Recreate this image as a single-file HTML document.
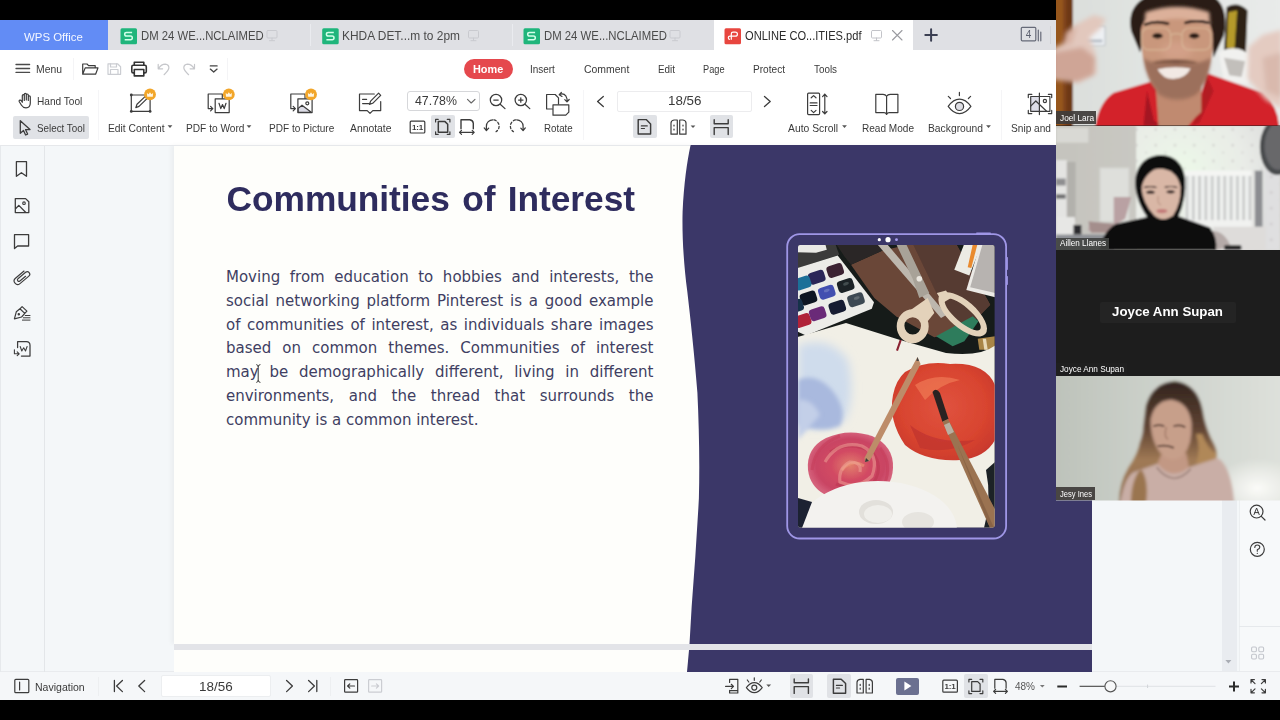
<!DOCTYPE html>
<html><head><meta charset="utf-8"><title>WPS Office</title>
<style>
*{box-sizing:border-box;margin:0;padding:0}
html,body{width:1280px;height:720px;overflow:hidden;background:#000;font-family:"Liberation Sans",sans-serif;color:#333}
#root{position:absolute;left:0;top:0;width:1280px;height:720px;overflow:hidden;background:#000}
#root div,#root svg,#root span{position:absolute}
.t{white-space:nowrap;font-size:12px;color:#3a3a3a}
svg{overflow:visible}
.ic{fill:none;stroke:#3c3c3c;stroke-width:1.2;stroke-linecap:round;stroke-linejoin:round}
.lt{stroke:#cbcdd2}
.hl{background:#e0e2e6;border-radius:2px}
</style></head><body>
<div id="root">
<!-- ===== app chrome backgrounds ===== -->
<div style="left:0;top:20px;width:1056px;height:30px;background:#dfe0e4"></div>
<div style="left:0;top:50px;width:1056px;height:95px;background:#fff"></div>
<div style="left:0;top:145px;width:1280px;height:527px;background:#f4f7f9"></div>
<div style="left:0;top:671px;width:1280px;height:29px;background:#f5f7f9;border-top:1px solid #e9ebee"></div>
<!-- tabs -->
<div style="left:0;top:20px;width:108px;height:30px;background:#628cf5"></div>
<div style="left:714px;top:20px;width:199px;height:30px;background:#fff"></div>
<div style="left:310px;top:24px;width:1px;height:22px;background:#eaebef"></div>
<div style="left:511.5px;top:24px;width:1px;height:22px;background:#eaebef"></div>
<div style="left:1050px;top:26px;width:1px;height:18px;background:#d3d4d9"></div>
<!-- Home pill -->
<div style="left:463.5px;top:59px;width:49px;height:19.5px;border-radius:10px;background:#e5484d"></div>
<!-- select tool hl -->
<div class="hl" style="left:12.5px;top:115.5px;width:76.5px;height:23.5px"></div>
<div class="hl" style="left:431px;top:115px;width:23.5px;height:23px"></div>
<div class="hl" style="left:632.5px;top:115px;width:24px;height:23px"></div>
<div class="hl" style="left:709.5px;top:115px;width:23.5px;height:23px"></div>
<!-- inputs -->
<div style="left:406.5px;top:90.5px;width:73.5px;height:20.5px;border:1px solid #d6d7da;border-radius:3px;background:#fff"></div>
<div style="left:616.5px;top:90.5px;width:135px;height:21px;border:1px solid #ececee;border-radius:2px;background:#fff"></div>
<!-- separators -->
<div style="left:73px;top:58px;width:1px;height:22px;background:#f4f4f6"></div>
<div style="left:227px;top:58px;width:1px;height:22px;background:#f4f4f6"></div>
<div style="left:98px;top:90px;width:1px;height:50px;background:#f5f5f7"></div>
<div style="left:1001px;top:90px;width:1px;height:50px;background:#f5f5f7"></div>
<div style="left:582.5px;top:90px;width:1px;height:50px;background:#f5f5f7"></div>
<!-- left sidebar border -->
<div style="left:0;top:145px;width:1px;height:527px;background:#e6e9ec"></div>
<div style="left:44px;top:145px;width:1px;height:527px;background:#e3e6e9"></div>
<!-- status -->
<div class="hl" style="left:789.5px;top:674px;width:23.5px;height:24px"></div>
<div class="hl" style="left:827px;top:674px;width:24px;height:24px"></div>
<div class="hl" style="left:964px;top:674px;width:24px;height:24px"></div>
<div style="left:161px;top:675px;width:110px;height:22px;background:#fff;border:1px solid #eceef0;border-radius:2px"></div>
<div style="left:896px;top:677.5px;width:23px;height:17px;background:#6b7090;border-radius:2px"></div>
<!-- right panels -->
<div style="left:1221.5px;top:500px;width:15px;height:171px;background:#e9ecf0"></div>
<div style="left:1238.5px;top:500px;width:42px;height:171px;background:#f7f9fa;border-left:1px solid #eceff1"></div>
<div style="left:1239px;top:626px;width:41px;height:1px;background:#e6e9ec"></div>

<!-- ===== slide page ===== -->
<div style="left:174px;top:145px;width:918px;height:499px;background:#fefefb;box-shadow:-3px 0 4px rgba(0,0,0,.04)"></div>
<div style="left:174px;top:644px;width:918px;height:6px;background:#e3e4e8"></div>
<div style="left:174px;top:650px;width:918px;height:22px;background:#fefefb"></div>
<div style="left:0;top:144.5px;width:690px;height:1px;background:#e6e8eb"></div>
<svg style="left:0;top:0" width="1280" height="720" viewBox="0 0 1280 720">
<path fill="#3b3768" d="M690.6 145 C687 162 684 183 682.6 212 C682 234 683.5 263 687.3 291.6 C690.6 320 694.5 356 697.4 392.7 C699 426 699.8 462 698.9 498 C697 534 694.5 570 691.7 606 L689.5 644 L1092 644 L1092 145 Z"/>
<path fill="#3b3768" d="M689 650 L1092 650 L1092 672 L687 672 Z"/>
<rect x="787.2" y="234.1" width="218.9" height="304.4" rx="12.5" fill="none" stroke="#9f96e6" stroke-width="1.8"/><rect x="976" y="232.5" width="15" height="1.6" rx=".8" fill="#9f96e6"/><rect x="1006.4" y="257" width="1.5" height="13" rx=".7" fill="#9f96e6"/><rect x="1006.4" y="276" width="1.5" height="9" rx=".7" fill="#9f96e6"/>
<circle cx="879.3" cy="239.7" r="1.6" fill="#fff"/><circle cx="888" cy="239.7" r="2.6" fill="#fff"/><circle cx="896.5" cy="239.7" r="1.4" fill="#a79df0"/>
<path d="M256.3 364.6 Q258.2 365 258.2 366.5 Q258.2 365 260.4 364.6 M258.2 366 V381 M256.3 382.4 Q258.2 382 258.2 380.5 Q258.2 382 260.4 382.4" fill="none" stroke="#333" stroke-width="1"/>
</svg>

<!-- slide body text -->
<div style="left:226px;top:264.81px;width:427.5px;height:24px;line-height:24px;font-size:15px;font-family:'DejaVu Sans','Liberation Sans',sans-serif;color:#403e62;white-space:nowrap;text-align:justify;text-align-last:justify;">Moving from education to hobbies and interests, the</div>
<div style="left:226px;top:288.66px;width:427.5px;height:24px;line-height:24px;font-size:15px;font-family:'DejaVu Sans','Liberation Sans',sans-serif;color:#403e62;white-space:nowrap;text-align:justify;text-align-last:justify;">social networking platform Pinterest is a good example</div>
<div style="left:226px;top:312.51px;width:427.5px;height:24px;line-height:24px;font-size:15px;font-family:'DejaVu Sans','Liberation Sans',sans-serif;color:#403e62;white-space:nowrap;text-align:justify;text-align-last:justify;">of communities of interest, as individuals share images</div>
<div style="left:226px;top:336.36px;width:427.5px;height:24px;line-height:24px;font-size:15px;font-family:'DejaVu Sans','Liberation Sans',sans-serif;color:#403e62;white-space:nowrap;text-align:justify;text-align-last:justify;">based on common themes. Communities of interest</div>
<div style="left:226px;top:360.21px;width:427.5px;height:24px;line-height:24px;font-size:15px;font-family:'DejaVu Sans','Liberation Sans',sans-serif;color:#403e62;white-space:nowrap;text-align:justify;text-align-last:justify;">may be demographically different, living in different</div>
<div style="left:226px;top:384.06px;width:427.5px;height:24px;line-height:24px;font-size:15px;font-family:'DejaVu Sans','Liberation Sans',sans-serif;color:#403e62;white-space:nowrap;text-align:justify;text-align-last:justify;">environments, and the thread that surrounds the</div>
<div style="left:226px;top:407.91px;width:427.5px;height:24px;line-height:24px;font-size:15px;font-family:'DejaVu Sans','Liberation Sans',sans-serif;color:#403e62;white-space:nowrap;">community is a common interest.</div>

<!-- ===== painting photo inside tablet ===== -->
<svg style="left:0;top:0" width="1280" height="720" viewBox="0 0 1280 720">
<defs>
<clipPath id="pc"><rect x="798" y="245" width="196.6" height="282.5" rx="2"/></clipPath>
<filter id="pb" x="-10%" y="-10%" width="120%" height="120%"><feGaussianBlur stdDeviation="0.7"/></filter>
<filter id="pb2" x="-20%" y="-20%" width="140%" height="140%"><feGaussianBlur stdDeviation="2.2"/></filter>
<filter id="pb3" x="-20%" y="-20%" width="140%" height="140%"><feGaussianBlur stdDeviation="5"/></filter>
<radialGradient id="redg" cx=".5" cy=".45" r=".6"><stop offset="0" stop-color="#e0533f"/><stop offset=".7" stop-color="#d8442f"/><stop offset="1" stop-color="#c9392f"/></radialGradient>
<radialGradient id="roseg" cx=".5" cy=".5" r=".5"><stop offset="0" stop-color="#e27f6c"/><stop offset=".45" stop-color="#d24a63"/><stop offset=".8" stop-color="#c94463"/><stop offset="1" stop-color="#d4607a"/></radialGradient>
</defs>
<g clip-path="url(#pc)">
<rect x="798" y="244.5" width="197" height="283" fill="#161b19"/>
<g filter="url(#pb)">
<path d="M851.0 264.7 L882.7 250.5 L912.7 243.8 L956.0 243.8 L990.2 304.7 L964.3 331.3 L934.3 337.2 L896.0 316.3 L874.3 298.0 Z" fill="#6b4739"/>
<path d="M912.7 243.8 L956.0 243.8 L990.2 304.7 L964.3 331.3 L946.0 313.0 Z" fill="#573a31"/>
<path d="M836.0 243.8 L879.3 243.8 L882.7 250.5 L851.0 264.7 L844.3 256.3 Z" fill="#2a2725"/>
<path d="M936.0 336.3 L972.7 316.3 L978.5 321.3 L964.3 341.3 L952.7 346.3 Z" fill="#2e7b5c"/>
<path d="M977.7 338.8 L995.2 336.3 L995.2 349.7 L979.3 349.7 Z" fill="#a98547"/>
<path d="M982.7 338.8 L986.0 338.8 L987.7 349.7 L984.3 349.7 Z" fill="#e8d9b8"/>
<path d="M954.3 269.7 L964.3 243.8 L981.8 243.8 L969.3 275.5 Z" fill="#ecebe4"/>
<path d="M972.7 244.7 L977.3 244.7 L971.3 268.0 L967.7 267.2 Z" fill="#e98a2e"/>
<path d="M980.2 243.8 L995.2 243.8 L995.2 297.2 L966.3 290.0 Z" fill="#eceae6"/>
<path d="M982.7 243.8 L995.2 243.8 L995.2 293.0 L970.2 287.2 Z" fill="#b7b3b0"/>
<path d="M796.8 243.8 L835.2 243.8 L839.3 254.7 L798.0 268.0 L796.8 268.0 Z" fill="#3b3b3a"/>
<path d="M796.8 243.8 L825.2 243.8 L826.8 249.7 L816.0 252.7 L796.8 252.2 Z" fill="#e9e9e6"/>
<path d="M796.8 268.3 L837.7 255.5 L874.0 302.2 L871.8 308.8 L806.0 335.5 L796.8 331.3 Z" fill="#ecece8"/>
<rect x="808.6" y="271.2" width="16.4" height="12" rx="3.4" fill="#2a2858" transform="rotate(-18 816.8 277.2)"/>
<rect x="827.0" y="264.5" width="16.4" height="12" rx="3.4" fill="#3a2030" transform="rotate(-18 835.2 270.5)"/>
<rect x="794.5" y="277.0" width="16.4" height="12" rx="3.4" fill="#1f6f98" transform="rotate(-18 802.7 283.0)"/>
<rect x="818.6" y="286.2" width="16.4" height="12" rx="3.4" fill="#4350b0" transform="rotate(-18 826.8 292.2)"/>
<rect x="837.5" y="279.5" width="16.4" height="12" rx="3.4" fill="#1a2428" transform="rotate(-18 845.7 285.5)"/>
<rect x="800.3" y="292.0" width="16.4" height="12" rx="3.4" fill="#101820" transform="rotate(-18 808.5 298.0)"/>
<rect x="829.1" y="301.2" width="16.4" height="12" rx="3.4" fill="#161c30" transform="rotate(-18 837.3 307.2)"/>
<rect x="847.8" y="293.7" width="16.4" height="12" rx="3.4" fill="#3e4a52" transform="rotate(-18 856.0 299.7)"/>
<rect x="794.5" y="314.5" width="16.4" height="12" rx="3.4" fill="#b02038" transform="rotate(-18 802.7 320.5)"/>
<rect x="809.5" y="307.8" width="16.4" height="12" rx="3.4" fill="#6a2a78" transform="rotate(-18 817.7 313.8)"/>
<rect x="787.0" y="300.3" width="16.4" height="12" rx="3.4" fill="#18324a" transform="rotate(-18 795.2 306.3)"/>
<ellipse cx="846.0" cy="283.8" rx="3" ry="1.6" fill="#fff" opacity=".18" transform="rotate(-18 846.0 283.8)"/>
<ellipse cx="856.8" cy="298.0" rx="3" ry="1.6" fill="#fff" opacity=".18" transform="rotate(-18 856.8 298.0)"/>
<ellipse cx="826.8" cy="290.5" rx="3" ry="1.6" fill="#fff" opacity=".18" transform="rotate(-18 826.8 290.5)"/>
<path d="M796.8 337.2 L846.0 323.0 L899.3 339.7 L946.0 353.0 Q979.3 357.2 995.2 345.5 L995 528 L798 528 Z" fill="#f1efe6"/>
</g>
<!-- blue wash -->
<path d="M798 345 Q830 335 848 360 Q856 395 845 420 Q820 432 798 425 Z" fill="#cfdcec" filter="url(#pb3)"/><path d="M798 380 Q815 372 832 390 Q848 410 840 426 Q820 434 798 424 Z" fill="#a9b9de" filter="url(#pb2)"/>
<path d="M798 400 Q812 398 820 415 L798 440 Z" fill="#c3cfe8" filter="url(#pb2)"/>

<!-- red flower -->
<g filter="url(#pb)">
<path d="M905 372 Q925 360 950 364 Q985 362 995 385 L995 440 Q985 458 960 460 Q925 462 905 445 Q888 420 893 395 Q896 380 905 372 Z" fill="url(#redg)"/>
<path d="M915 385 Q935 372 960 380 Q940 384 925 400 Z" fill="#ef7a55" opacity=".7"/>
<path d="M910 425 Q935 445 975 440 Q950 455 920 448 Z" fill="#c2352f" opacity=".8"/>
<!-- rose -->
<path d="M808 470 Q806 448 826 438 Q848 428 872 436 Q894 446 893 468 Q892 490 872 496 Q846 502 824 494 Q810 486 808 470 Z" fill="url(#roseg)"/><path d="M830 452 Q850 440 872 452 Q884 466 874 482 Q856 492 836 484" fill="none" stroke="#b8324e" stroke-width="3" opacity=".45"/><path d="M842 470 Q852 458 864 466" fill="none" stroke="#ef9a78" stroke-width="3" opacity=".6"/>
<path d="M825 462 Q838 440 862 446 Q880 455 872 476 Q858 490 840 482 Q838 468 850 462 Q862 462 860 472" fill="none" stroke="#f0a899" stroke-width="3.2" opacity=".5"/>
<path d="M812 470 Q815 445 840 436 M880 448 Q893 465 884 485" fill="none" stroke="#c8405e" stroke-width="3" opacity=".7"/>
<!-- white palette -->
<ellipse cx="878" cy="530" rx="79" ry="49" fill="#f3f2ef"/>
<ellipse cx="876" cy="512" rx="17" ry="12" fill="#e2e0db"/><ellipse cx="918" cy="522" rx="16" ry="10" fill="#e6e4df"/>
<ellipse cx="878" cy="514" rx="14" ry="9" fill="#efeeea"/>
<!-- dark corners -->
<path d="M798 498 L812 502 L802 528 L798 528 Z" fill="#1c2132"/>
<path d="M986 470 L995 462 L995 528 L984 528 Q992 500 986 470 Z" fill="#1d2026"/>
<!-- pencil -->
<path d="M917.5 357 L920.6 364 L869.6 461 L865 462 L864.4 458 L913.6 364 Z" fill="#bd8c69"/><path d="M917.5 357 L919 361 L916.3 361 Z" fill="#444"/><path d="M866 458 L865 462 L869 461 Z" fill="#3a3a3a"/>
<!-- brush -->
<path d="M932.5 392 Q936 387 940 393 L948.5 419 L942.5 422 Z" fill="#2a2423"/>
<path d="M942.5 421.5 L948 419 L998 515 L998 528 L990 528 Z" fill="#9b7351"/><path d="M944 425 L949.5 422.5 L954 432 L948 435 Z" fill="#b9b0a2"/><path d="M958 446 L990 528 L994 528 Z" fill="#7d5a3e" opacity=".6"/>
<!-- scissors -->
<path d="M876.8 243.8 L886.8 243.8 L946.8 314.7 L941.0 318.0 Z" fill="#bdb7ae"/>
<path d="M896.0 243.8 L906.0 243.8 L929.3 293.0 L919.3 298.0 L912.7 278.8 Z" fill="#a8a298"/>
<circle cx="919.3" cy="278.8" r="2.8" fill="#e9e5de"/>
<path d="M896.7 326.3 a16 17 0 1 0 32 0 a16 17 0 1 0 -32 0 Z M904.4 325.8 a8.3 8.6 0 1 1 16.6 0 a8.3 8.6 0 1 1 -16.6 0 Z" fill="#e3d2ba" fill-rule="evenodd"/>
<path d="M911.0 309.7 L927.7 298.0 L934.3 313.0 L927.7 321.3 L917.7 316.3 Z" fill="#e3d2ba"/>
<g transform="rotate(41 962.7 314.3)"><path d="M932.7 314.3 a30 13.5 0 1 0 60 0 a30 13.5 0 1 0 -60 0 Z M939.7 314.3 a23 7.5 0 1 1 46 0 a23 7.5 0 1 1 -46 0 Z" fill="#e3d2ba" fill-rule="evenodd"/></g>
<path d="M936.8 293.0 L946.0 290.5 L951.0 298.0 L942.7 303.0 Z" fill="#e3d2ba"/>
<path d="M899.7 339.7 L901.7 340.3 L898.0 351.0 L896.0 350.3 Z" fill="#8a2030"/>
</g>
</g>
</svg>

<!-- ===== icons (page coordinates) ===== -->
<svg style="left:0;top:0" width="1280" height="720" viewBox="0 0 1280 720">
<defs>
<g id="crown"><circle r="5.9" fill="#f2a62a"/><path d="M-2.8 2.3 L-3.1 -1.5 L-1.4 -0.1 L0 -2.2 L1.4 -0.1 L3.1 -1.5 L2.8 2.3 Z" fill="#fff5e0"/></g>
<g id="mon" class="ic" style="stroke:#c9cacf;stroke-width:1"><rect x="-5" y="-5" width="10" height="7.5" rx="1"/><path d="M0 2.5 V5 M-2.5 5.2 H2.5"/></g>
<g id="sicon"><rect x="-8" y="-8" width="16.5" height="16" rx="1.5" fill="#1fb57b"/><path d="M3.6 -3.6 H-2 Q-3.8 -3.6 -3.8 -1.9 Q-3.8 -0.1 -2 -0.1 H2 Q3.8 -0.1 3.8 1.7 Q3.8 3.6 2 3.6 H-3.8" fill="none" stroke="#d2ffe9" stroke-width="1.5"/></g>
<g id="dd"><path d="M-2.4 -1.2 H2.4 L0 1.4 Z" fill="#555"/></g>
</defs>
<!-- tabs -->
<use href="#sicon" x="128.5" y="36.2"/><use href="#sicon" x="330.2" y="36.2"/><use href="#sicon" x="531.5" y="36.2"/>
<use href="#mon" x="272" y="35.5"/><use href="#mon" x="473.5" y="35.5"/><use href="#mon" x="675" y="35.5"/>
<g transform="translate(876.5 35.5)"><g class="ic" style="stroke:#c3c4c9;stroke-width:1"><rect x="-5" y="-5" width="10" height="7.5" rx="1"/><path d="M0 2.5 V5 M-2.5 5.2 H2.5"/></g></g>
<rect x="724.5" y="28.2" width="16.5" height="16" rx="1.5" fill="#e8463f"/>
<path d="M730 39.5 Q728.3 39.5 728.3 37.8 Q728.3 36.2 730 36.2 H735.2 Q737.4 36.2 737.4 34.2 Q737.4 32.2 735.2 32.2 H733 Q731.3 32.2 731.3 34 V39.8" fill="none" stroke="#fff" stroke-width="1.2"/>
<path class="ic" d="M892.5 30.5 L902 40 M902 30.5 L892.5 40" style="stroke:#9a9ba0;stroke-width:1.1"/>
<path class="ic" stroke-linecap="butt" d="M925.3 35 H936.9 M931.1 29.3 V40.7" style="stroke:#3b3f52;stroke-width:2"/>
<g class="ic" style="stroke:#666a78;stroke-width:1.2"><rect x="1021.3" y="27.3" width="14.5" height="13.5" rx="1"/><path d="M1038.3 30 V40.8 M1040.8 32 V40.8"/></g>
<text x="1028.5" y="37.8" font-size="10" text-anchor="middle" fill="#5d6170" font-family="Liberation Sans, sans-serif">4</text>
<!-- menu row -->
<path class="ic" stroke-linecap="butt" d="M16 64.5 H29.6 M16 68.5 H29.6 M16 72.4 H29.6" style="stroke:#4a4a4a;stroke-width:1.3"/>
<path class="ic" d="M82.7 74 V64 H87 L88.6 65.7 H95.2 V67.8 M82.7 74.2 L85.2 67.9 H98 L95.6 74.2 Z"/>
<g class="ic lt"><path d="M108 63.8 H117.5 L120.6 66.8 V74.3 H108 Z"/><path d="M110.5 63.8 V67 H116.5 V63.8 M110.5 74.3 V69.5 H118 V74.3"/></g>
<g class="ic" style="stroke:#333;stroke-width:1.6"><path d="M134.3 65.3 V62.2 H143.8 V65.3"/><rect x="131.8" y="65.3" width="14.5" height="7.6" rx="1.5"/><rect x="134.3" y="69.5" width="9.5" height="6.4" fill="#fff"/></g>
<g class="ic" style="stroke:#c6c7cb;stroke-width:1.2"><path d="M158.2 64.4 V68.8 H162.6 M158.6 68.4 Q161.5 64.2 165.2 64.2 Q168.9 64.6 168.9 67.9 Q168.6 70.5 164.1 74.7"/><path d="M194.5 64.4 V68.8 H190.1 M194.1 68.4 Q191.2 64.2 187.5 64.2 Q183.8 64.6 183.8 67.9 Q184.1 70.5 188.6 74.7"/></g>
<path class="ic" d="M210.3 65.9 H217.1 M210.3 69.1 L213.7 72.1 L217.1 69.1" style="stroke:#444;stroke-width:1.3"/>
<!-- toolbar : hand / select -->
<path class="ic" transform="translate(0 .5)" d="M22.3 101.5 V95.3 Q22.3 94.2 23.3 94.2 Q24.3 94.2 24.3 95.3 V100 M24.3 99 V93.8 Q24.3 92.8 25.3 92.8 Q26.3 92.8 26.3 93.8 V99.5 M26.3 99 V94.5 Q26.3 93.5 27.3 93.5 Q28.3 93.5 28.3 94.5 V100 M28.3 99.5 V96.3 Q28.3 95.4 29.3 95.4 Q30.3 95.4 30.3 96.3 V102.5 Q30.3 107.3 26 107.3 Q23 107.3 21.5 104.8 L19.3 101.2 Q18.8 100 19.8 99.6 Q20.8 99.4 21.3 100.2 L22.3 101.8"/>
<path class="ic" d="M20.3 120.8 V133.3 L23.5 130.5 L25.6 135 L27.6 134.1 L25.6 129.7 L30 129.5 Z" style="stroke-width:1.3"/>
<!-- edit content -->
<g class="ic"><rect x="131.3" y="95" width="18.8" height="16.4"/><path d="M135.8 107.6 L137 104.3 L145 96.6 L147 98.6 L139 106.4 Z"/></g>
<g fill="#3c3c3c"><circle cx="131.3" cy="95" r="1.4"/><circle cx="131.3" cy="111.4" r="1.4"/><circle cx="150.1" cy="111.4" r="1.4"/></g>
<use href="#crown" x="150" y="94.4"/>
<!-- pdf to word -->
<g class="ic"><path d="M222.3 98.6 V94 H208.2 V108.6 H212.6 M210.6 106.4 L212.8 108.6 L210.6 110.8"/><rect x="215.2" y="98.8" width="14" height="13.8" fill="#fff"/><path d="M219 103.3 L220.8 108.6 L222.5 104.6 L224.2 108.6 L226 103.3"/></g>
<use href="#crown" x="228.8" y="94.4"/>
<!-- pdf to picture -->
<g class="ic"><path d="M305 98.6 V94 H290.8 V108.6 H295.2 M293.2 106.4 L295.4 108.6 L293.2 110.8"/><rect x="297.9" y="98.8" width="14.2" height="13.8" fill="#fff"/><path d="M298.2 112.3 V108.4 L302 105.2 L311.6 112.4 Z" fill="#dcdce6"/><circle cx="307.3" cy="103.3" r="1.5"/></g>
<use href="#crown" x="311" y="94.4"/>
<!-- annotate -->
<g class="ic"><path d="M374.3 94 H359.5 V110.6 H367.2 L370 113.4 L372.8 110.6 H380.7 V101.6"/><path d="M362.6 99.4 H366.6 M362.6 103.6 H368.6"/><path d="M369.4 104.4 L370.6 101.2 L378.6 93.2 L380.7 95.3 L372.7 103.3 Z"/></g>
<!-- zoom box chevron, zoom in/out -->
<path class="ic" d="M467.5 99.3 L471.2 103 L475 99.3" style="stroke:#666;stroke-width:1.1"/>
<g class="ic" style="stroke-width:1.25"><circle cx="496" cy="100" r="5.7"/><path d="M500.2 104.2 L505 108.6 M493.8 100 H498.2"/><circle cx="520.8" cy="100" r="5.7"/><path d="M525 104.2 L529.8 108.6 M518.6 100 H523 M520.8 97.8 V102.2"/></g>
<!-- rotate -->
<g class="ic"><path d="M558.5 104.2 V97.8 L555.2 94.5 H546.6 V109 H552.5"/><path d="M553 104.8 H568.8 V112.2 L565.8 115.2 H553 Z" fill="#fff"/><path d="M559.3 94.6 Q563.5 92.8 566 96.2 Q567.4 98.4 567 101.6 M564.8 99.6 L567 101.9 L569.2 99.5 M561.4 92.4 L559.2 94.7 L562 96.4"/></g>
<!-- row 2 -->
<g class="ic"><rect x="410.2" y="121.2" width="14.6" height="11.8" rx="1"/></g>
<text x="417.5" y="130.1" font-size="8" font-weight="700" text-anchor="middle" fill="#3c3c3c" font-family="Liberation Sans, sans-serif" letter-spacing="-0.2">1:1</text>
<g class="ic"><path d="M438.3 121.6 H445 L447.7 124.3 V132.2 H438.3 Z" stroke-width="1.5"/><path d="M435.6 122 V119.4 H438.2 M447.3 119.4 H449.9 V122 M449.9 131.8 V134.4 H447.3 M438.2 134.4 H435.6 V131.8"/></g>
<g class="ic"><path d="M461 128.8 V119.8 H469.8 Q473 120.3 473.3 123.3 V128.8" stroke-width="1.4"/><path d="M459.5 132.3 H474.2 M461.5 130.3 L459.5 132.3 L461.5 134.3 M472.2 130.3 L474.2 132.3 L472.2 134.3"/></g>
<g class="ic" style="stroke-width:1.25"><path d="M486.4 129.6 V126.2 A6.4 6.4 0 0 1 492.8 119.8"/><path d="M492.8 119.8 A6.4 6.4 0 0 1 496 131.7" stroke-dasharray="2.3 2.1" stroke-dashoffset="-1.2"/><path d="M484.2 127.9 L486.4 130.5 L488.7 128.1"/></g>
<g class="ic" style="stroke-width:1.25"><path d="M523.1 129.6 V126.2 A6.4 6.4 0 0 0 516.7 119.8"/><path d="M516.7 119.8 A6.4 6.4 0 0 0 513.5 131.7" stroke-dasharray="2.3 2.1" stroke-dashoffset="-1.2"/><path d="M520.8 128.1 L523.1 130.5 L525.3 127.9"/></g>
<!-- page nav -->
<path class="ic" d="M603.3 96.4 L597.6 101.5 L603.3 106.6 M764.5 96.4 L770.2 101.5 L764.5 106.6" style="stroke-width:1.3"/>
<g class="ic" style="stroke-width:1.45"><path d="M638.2 119.6 H646.2 L650.6 124 V134 H638.2 Z"/><path d="M641.3 125.9 H647.3 M641.3 128.5 H644.5" stroke-width="1.1"/></g>
<g class="ic"><path d="M671 134.2 V123 Q671 120.5 674 120 H677.3 V134.2 Z M686 134.2 V123 Q686 120.5 683 120 H679.7 V134.2 Z"/><path d="M674 125 V126 M674 129 V130 M683 125 V126 M683 129 V130"/></g>
<use href="#dd" x="693" y="126.6"/>
<path class="ic" d="M714.2 119.8 V123.8 H728.2 V119.8 M714.2 134.6 V127.6 H728.2 V134.6" style="stroke-width:1.4"/>
<!-- auto scroll -->
<g class="ic"><rect x="807.6" y="93.2" width="12" height="21.4" rx="1"/><path d="M811.2 97.8 L813.6 95.6 L816 97.8 M811.2 110.4 L813.6 112.6 L816 110.4 M810.2 102.9 H817 M810.2 105.5 H817"/><path d="M824.8 94.2 V113.9 M822.6 96.6 L824.8 94.2 L827 96.6 M822.6 111.5 L824.8 113.9 L827 111.5"/></g>
<!-- read mode -->
<g class="ic"><path d="M886.6 96.2 Q885.4 94.3 883 94.3 H875.8 V112.6 H884 Q885.8 112.6 886.6 114.4 Q887.4 112.6 889.2 112.6 H897.9 V94.3 H890.2 Q887.8 94.3 886.6 96.2 V113"/></g>
<!-- background eye -->
<g class="ic"><path d="M948.2 106.4 Q953.4 99.2 959.5 99.2 Q965.6 99.2 970.9 106.4 Q965.6 113.6 959.5 113.6 Q953.4 113.6 948.2 106.4 Z"/><circle cx="959.5" cy="106.4" r="4.1" fill="#dedee4"/><path d="M959.4 92.4 V95.6 M948.3 96.4 L950.5 98.5 M970.6 96.4 L968.4 98.5"/></g>
<!-- snip -->
<g class="ic"><rect x="1030.7" y="96.5" width="8.7" height="14.8" fill="#dedee8" stroke="none"/><rect x="1030.7" y="96.5" width="19.2" height="14.8"/><path d="M1030.7 106.2 L1035.8 101 L1046.6 111.3"/><circle cx="1044.9" cy="101" r="1.6"/><path d="M1028.3 97.6 V94.4 H1031.8 M1048.4 94.4 H1051.7 V97.6 M1028.3 110.4 V113.6 H1031.8 M1048.4 113.6 H1051.7 V110.4 M1039.4 93 V114.6"/></g>
<!-- label dropdown arrows -->
<use href="#dd" x="170" y="126.5"/><use href="#dd" x="249" y="126.5"/><use href="#dd" x="844.5" y="126.5"/><use href="#dd" x="988.5" y="126.5"/>
<!-- left sidebar -->
<g class="ic" style="stroke-width:1.3">
<path d="M16.4 161.7 H26.5 V176.3 L21.4 172.7 L16.4 176.3 Z"/>
<path d="M15.3 198.6 H25.6 L28.8 201.8 V212.6 H15.3 Z M15.3 209 L18.8 205.4 L25.8 212.5"/><circle cx="24" cy="203.2" r="1.3" stroke-width="1.1"/>
<path d="M14.5 234.7 H28.6 V246 H17.6 L14.5 248.5 Z"/>
<g transform="translate(22 277.3) rotate(-40)"><path d="M5.6 -3.5 H-5.6 A3.5 3.5 0 0 0 -5.6 3.5 H6 A2.5 2.5 0 0 0 6 -1.5 H-4 A1.5 1.5 0 0 0 -4 1.5 H3.4" stroke-width="1.15"/></g>
<path d="M14.4 318.9 L16.3 311.8 L19.9 308.8 L24.8 313.4 L21.6 317 Z M19.9 308.8 L22.1 306.6 L26.9 311.1 L24.8 313.4" stroke-width="1.2"/><circle cx="18.8" cy="314.3" r=".6" fill="#3c3c3c"/><path d="M25.2 315.5 H30 M23.4 317.8 H30 M22.4 320.1 H30" stroke-width="1"/>
<path d="M17.6 347.6 V341.7 H26.4 Q30 341.9 30 345.2 V356 H21.4" stroke-width="1.25"/><path d="M20.2 346.5 L21.8 351 L23.7 347.8 L25.5 351 L27.1 346.5" stroke-width="1.05"/><path d="M14.4 349.7 V353.8 H19 M17.2 351.9 L19.2 353.8 L17.2 355.7" stroke-width="1.1"/>
</g>
<!-- right panel -->
<g class="ic" style="stroke-width:1.2"><circle cx="1256.6" cy="511.6" r="6.4"/><path d="M1261.3 516.3 L1265 520"/><path d="M1254 514.6 L1256.6 508 L1259.2 514.6 M1254.9 512.6 H1258.3" stroke-width="1"/>
<circle cx="1257.3" cy="549.3" r="7"/><path d="M1254.8 547.4 Q1254.8 545 1257.3 545 Q1259.8 545 1259.8 547.2 Q1259.8 548.6 1257.3 549.8 V551.3 M1257.3 553.2 V553.4" stroke-width="1.1"/></g>
<g class="ic" style="stroke:#c3c6cc;stroke-width:1.1"><rect x="1251.6" y="647" width="4.8" height="4.8" rx="1.2"/><rect x="1258.8" y="647" width="4.8" height="4.8" rx="1.2"/><rect x="1251.6" y="654.2" width="4.8" height="4.8" rx="1.2"/><rect x="1258.8" y="654.2" width="4.8" height="4.8" rx="1.2"/></g>
<path d="M1225.4 660 H1231.4 L1228.4 663.4 Z" fill="#a9adb4"/>
<!-- status bar -->
<g class="ic"><rect x="14.8" y="679.3" width="14" height="13.4" rx="1"/><path d="M19.6 682 V690"/></g>
<path class="ic" d="M114.4 680.5 V691.6 M122.4 680.5 L116.6 686 L122.4 691.6 M144.6 680.5 L138.8 686 L144.6 691.6 M286.6 680.5 L292.4 686 L286.6 691.6 M308.6 680.5 L314.4 686 L308.6 691.6 M316.8 680.5 V691.6" style="stroke-width:1.3"/>
<g class="ic"><rect x="344.6" y="679.6" width="13" height="12.6" rx=".8"/><path d="M354.5 686 H347.7 M349.8 683.8 L347.6 686 L349.8 688.2"/></g>
<g class="ic lt"><rect x="368.6" y="679.6" width="13" height="12.6" rx=".8"/><path d="M371.7 686 H378.5 M376.4 683.8 L378.6 686 L376.4 688.2"/></g>
<path d="M330.5 677 V696 M98.5 677 V696" stroke="#edeff1" stroke-width="1"/>
<g class="ic"><path d="M729.6 682.4 V679.4 H737.8 V693 H729.6 V690.4 M729.6 690.6 H737.8"/><path d="M725.6 686.4 H733.4 M731.3 684.3 L733.5 686.4 L731.3 688.6"/></g>
<g class="ic"><path d="M746.4 687.6 Q750 682.6 754.3 682.6 Q758.6 682.6 762.2 687.6 Q758.6 692.6 754.3 692.6 Q750 692.6 746.4 687.6 Z"/><circle cx="754.3" cy="687.6" r="2.5"/><path d="M754.3 677.8 V680.3 M747.3 680 L748.8 682 M761.3 680 L759.8 682"/></g>
<use href="#dd" x="768.7" y="685.6"/>
<path class="ic" d="M794.2 679 V682.8 H808.4 V679 M794.2 693.4 V686.6 H808.4 V693.4" style="stroke-width:1.4"/>
<g class="ic" style="stroke-width:1.45"><path d="M833.4 679.2 H841.2 L845.6 683.6 V693.2 H833.4 Z"/><path d="M836.4 685.4 H842.4 M836.4 688 H839.6" stroke-width="1.1"/></g>
<g class="ic"><path d="M857 693 V682.4 Q857 680 860 679.4 H863.3 V693 Z M872.4 693 V682.4 Q872.4 680 869.4 679.4 H866.1 V693 Z"/><path d="M860.2 684.4 V685.4 M860.2 688.2 V689.2 M869.2 684.4 V685.4 M869.2 688.2 V689.2"/></g>
<path d="M904.4 681.6 V690.4 L911.4 686 Z" fill="#fff"/>
<g class="ic"><rect x="942.8" y="680.2" width="14.6" height="12" rx="1"/></g>
<text x="950.1" y="689.2" font-size="8" font-weight="700" text-anchor="middle" fill="#3c3c3c" font-family="Liberation Sans, sans-serif" letter-spacing="-0.2">1:1</text>
<g class="ic"><path d="M971.7 681.6 H977.7 L980.1 684 V691.4 H971.7 Z"/><path d="M968.9 682 V679.3 H971.7 M980 679.3 H982.8 V682 M982.8 690.8 V693.6 H980 M971.7 693.6 H968.9 V690.8"/></g>
<g class="ic"><path d="M994.8 688.2 V679.4 H1003 Q1005.8 680 1006.1 682.6 V688.2"/><path d="M993.6 691.3 H1007.4 M995.6 689.3 L993.6 691.3 L995.6 693.3 M1005.4 689.3 L1007.4 691.3 L1005.4 693.3"/></g>
<g transform="translate(1042.3 686.2)"><path d="M-2.4 -1.2 H2.4 L0 1.4 Z" fill="#777"/></g>
<path d="M1057.3 686.4 H1067 M1229 686.4 H1239 M1234 681.4 V691.4" stroke="#2b2b2b" stroke-width="2" fill="none"/>
<path d="M1079.6 686.3 H1105" stroke="#444" stroke-width="1.1"/><path d="M1116 686.3 H1215.5" stroke="#dfe1e5" stroke-width="1"/><path d="M1147.6 684.6 V688" stroke="#d0d3d8" stroke-width="1"/>
<circle cx="1110.5" cy="686.3" r="5.6" fill="#f7f8f9" stroke="#555" stroke-width="1.1"/>
<g class="ic" style="stroke-width:1.2"><path d="M1251 683 V679.6 H1254.4 M1251.2 679.8 L1255 683.6 M1262 679.6 H1265.4 V683 M1265.2 679.8 L1261.4 683.6 M1251 689.4 V692.8 H1254.4 M1251.2 692.6 L1255 688.8 M1262 692.8 H1265.4 V689.4 M1265.2 692.6 L1261.4 688.8"/></g>
</svg>

<!-- ===== video panel ===== -->
<div style="left:1056px;top:0;width:224px;height:500px;background:#1b1b1b"></div>
<!-- tile 1 : Joel Lara -->
<svg style="left:1056px;top:0" width="224" height="125.5" viewBox="0 0 1280 717" preserveAspectRatio="none">
<defs>
<filter id="b1" x="-20%" y="-20%" width="140%" height="140%"><feGaussianBlur stdDeviation="9"/></filter>
<filter id="b2" x="-20%" y="-20%" width="140%" height="140%"><feGaussianBlur stdDeviation="22"/></filter>
<filter id="bA" x="-2%" y="-2%" width="104%" height="104%"><feGaussianBlur stdDeviation="5.5"/></filter>
<filter id="b3" x="-20%" y="-20%" width="140%" height="140%"><feGaussianBlur stdDeviation="13"/></filter>
<filter id="b0" x="-20%" y="-20%" width="140%" height="140%"><feGaussianBlur stdDeviation="4"/></filter>
<linearGradient id="wall1" x1="0" x2="1"><stop offset="0" stop-color="#d9dcd9"/><stop offset=".5" stop-color="#e3e6e4"/><stop offset="1" stop-color="#e9ebea"/></linearGradient>
<clipPath id="c1"><rect width="1280" height="717"/></clipPath>
</defs>
<g clip-path="url(#c1)"><g filter="url(#bA)">
<rect x="-60" y="-60" width="1400" height="837" fill="url(#wall1)"/>
<rect x="-60" y="-60" width="155" height="837" fill="#80441c"/><rect x="-60" y="-60" width="100" height="837" fill="#96561f"/><rect x="60" y="-60" width="35" height="837" fill="#6d3816" filter="url(#b0)"/>
<rect x="110" y="150" width="170" height="110" fill="#eef1f4" stroke="#aab0b8" stroke-width="4"/>
<rect x="150" y="225" width="115" height="18" fill="#9aa3ae" opacity=".6"/>
<!-- poster -->
<g filter="url(#b0)"><path d="M975 40 Q1040 5 1095 60 L1085 300 L960 290 Z" fill="#2d2418"/><path d="M985 70 L1035 60 L1020 280 L975 275 Z" fill="#b59a2a"/>
<path d="M930 300 Q1040 240 1120 330 L1100 480 L960 470 Z" fill="#f1f1ef"/><path d="M960 330 L1080 350 L1060 440 L990 430 Z" fill="#9a9590" opacity=".55"/></g>
<!-- shirt -->
<g filter="url(#b0)"><path d="M225 717 Q250 580 330 530 L545 465 L600 560 L820 560 L868 420 L1180 530 Q1265 600 1275 717 L1275 780 L225 780 Z" fill="#d3202b"/>
<path d="M520 520 L560 690 L600 717 L500 717 Z" fill="#a31620"/><path d="M860 430 L900 520 L820 700 L780 717 L830 560 Z" fill="#b31a24"/></g>
<!-- neck -->
<path d="M570 500 L830 480 L830 640 Q760 700 720 780 L590 780 Z" fill="#c08a70" filter="url(#b0)"/>
<!-- hair -->
<path d="M430 180 Q400 40 520 -20 L900 -20 Q990 40 960 200 L900 330 L880 150 Q700 60 520 130 L480 300 Z" fill="#2b1e19" filter="url(#b0)"/>
<!-- face -->
<path d="M485 170 Q500 70 690 60 Q880 70 895 190 Q905 360 840 480 Q760 570 690 570 Q610 570 540 470 Q480 340 485 170 Z" fill="#c9977c" filter="url(#b0)"/>
<path d="M505 150 Q690 60 880 150 L875 70 Q690 10 512 70 Z" fill="#dcb09a" filter="url(#b1)"/><ellipse cx="690" cy="290" rx="90" ry="50" fill="#d3a088" filter="url(#b2)"/>
<!-- beard -->
<path d="M500 330 Q560 380 690 350 Q800 380 885 330 Q880 460 800 540 Q690 600 590 540 Q510 450 500 330 Z" fill="#8a6150" opacity=".7" filter="url(#b1)"/>
<path d="M580 395 Q670 375 770 392 Q740 450 670 452 Q610 450 580 395 Z" fill="#f2e9e4" filter="url(#b0)"/>
<path d="M560 362 Q680 326 800 362 Q690 348 560 362 Z" stroke="#5a382b" stroke-width="12" fill="none" opacity=".75" filter="url(#b1)"/>
<!-- brows / eyes -->
<g filter="url(#b0)" stroke="#2b1e19" stroke-width="16" fill="none" stroke-linecap="round"><path d="M510 140 Q570 115 640 135"/><path d="M740 130 Q800 110 870 130"/></g>
<g filter="url(#b0)" fill="#2b1e19"><ellipse cx="580" cy="205" rx="30" ry="16"/><ellipse cx="790" cy="205" rx="30" ry="16"/></g>
<g stroke="#d9b99a" stroke-width="7" fill="none" opacity=".9"><rect x="490" y="160" width="165" height="125" rx="40"/><rect x="720" y="160" width="165" height="125" rx="40"/><path d="M655 200 Q688 185 720 200"/></g>
<!-- hands -->
<g filter="url(#b3)"><path d="M40 250 L95 150 L215 85 L285 105 L255 160 L190 215 L225 300 L235 420 L130 475 L-20 450 L-20 280 Z" fill="#e2c8bd"/><path d="M-20 300 L150 270 L225 330 L215 430 L110 470 L-20 440 Z" fill="#cfa596"/><path d="M60 180 L120 150 L90 250 L40 260 Z" fill="#d9b3a4"/>
<path d="M1100 270 L1180 200 L1290 170 L1290 620 L1200 570 L1095 450 Z" fill="#e4cbc1"/><path d="M1180 330 L1290 300 L1290 560 L1200 520 Z" fill="#d9b9ad"/></g>
<!-- label -->
</g></g>
</svg>
<!-- tile 2 : Aillen Llanes -->
<svg style="left:1056px;top:125.5px" width="224" height="124.5" viewBox="0 0 1280 711" preserveAspectRatio="none">
<defs>
<linearGradient id="wall2" x1="0" x2="1"><stop offset="0" stop-color="#c4c3bd"/><stop offset="1" stop-color="#d2d1cb"/></linearGradient>
<radialGradient id="wp2" cx=".35" cy=".35" r=".8"><stop offset="0" stop-color="#ecf8e8"/><stop offset=".6" stop-color="#e9ece7"/><stop offset="1" stop-color="#dcdcdc"/></radialGradient>
<clipPath id="c2"><rect width="1280" height="711"/></clipPath>
<pattern id="stars" width="110" height="90" patternUnits="userSpaceOnUse"><circle cx="20" cy="20" r="7" fill="#b9b3b6" opacity=".55"/><circle cx="75" cy="62" r="6" fill="#b9b3b6" opacity=".5"/></pattern>
<pattern id="bars" width="36" height="10" patternUnits="userSpaceOnUse"><rect width="36" height="10" fill="#eef0ee"/><rect x="24" width="9" height="10" fill="#b4b5b5"/></pattern>
</defs>
<g clip-path="url(#c2)"><g filter="url(#bA)">
<rect x="-60" y="-60" width="1400" height="831" fill="url(#wall2)"/>
<rect x="0" y="10" width="185" height="85" fill="#d9d9d4" filter="url(#b0)"/>
<rect x="0" y="195" width="62" height="430" fill="#e4e4e2"/><rect x="0" y="300" width="55" height="40" fill="#8e8e90" filter="url(#b0)"/><rect x="0" y="390" width="55" height="25" fill="#6e6e70" filter="url(#b0)"/>
<rect x="62" y="205" width="50" height="330" fill="#b2b1ac"/>
<rect x="250" y="238" width="168" height="310" fill="#dedfdb" stroke="#cfcfca" stroke-width="8"/>
<path d="M330 405 L430 405 L395 530 L345 560 L190 545 L185 600 L330 600 Z" fill="#b9a1a3" filter="url(#b0)"/>
<path d="M185 545 L330 560 L330 610 L200 610 Z" fill="#a48e8c" filter="url(#b0)"/>
<rect x="0" y="520" width="108" height="100" fill="#e7e7e5"/><rect x="100" y="565" width="45" height="55" fill="#2c2c2e"/>
<rect x="0" y="620" width="330" height="95" fill="#8d9095" filter="url(#b0)"/>
<!-- wallpaper -->
<rect x="458" y="0" width="740" height="711" fill="url(#wp2)"/><rect x="458" y="0" width="740" height="300" fill="url(#stars)"/>
<rect x="1195" y="0" width="85" height="711" fill="#dfdfe0"/><rect x="1195" y="0" width="85" height="711" fill="url(#stars)"/>
<!-- crib -->
<rect x="735" y="255" width="390" height="30" fill="#f4f5f3"/><rect x="735" y="285" width="385" height="255" fill="url(#bars)"/><rect x="735" y="538" width="390" height="40" fill="#f1f2f0"/>
<rect x="1128" y="255" width="52" height="460" fill="#8c8d91"/><rect x="1118" y="255" width="18" height="460" fill="#e5e5e3"/>
<rect x="900" y="575" width="300" height="140" fill="#dedcda" filter="url(#b0)"/><path d="M880 600 Q960 590 1000 690 L900 711 Z" fill="#b5aaa8" filter="url(#b0)"/>
<rect x="960" y="680" width="100" height="30" rx="12" fill="#2a2a2c" filter="url(#b0)"/>
<!-- lamp -->
<ellipse cx="1265" cy="120" rx="100" ry="160" fill="#4a4b4d" filter="url(#b0)"/><ellipse cx="1270" cy="115" rx="78" ry="135" fill="#67686b" filter="url(#b0)"/>
<!-- person -->
<g filter="url(#b0)"><path d="M245 711 Q270 600 340 560 L520 520 Q440 400 455 290 Q480 170 600 165 Q720 170 738 300 Q745 420 700 515 L880 580 Q925 640 915 711 Z" fill="#0f0e10"/>
<path d="M487 345 Q500 250 580 245 Q690 240 712 350 Q715 440 670 510 Q610 555 560 510 Q495 440 487 345 Z" fill="#d9b7a6"/>
<path d="M560 250 Q480 300 487 400 L470 300 Q500 220 580 215 Z" fill="#0f0e10"/></g>
<g filter="url(#b0)" stroke="#3a2a26" stroke-width="9" fill="none" stroke-linecap="round"><path d="M505 352 Q540 338 572 352"/><path d="M625 350 Q660 338 690 352"/></g>
<g filter="url(#b0)" fill="#2a1d1b"><ellipse cx="540" cy="378" rx="24" ry="9"/><ellipse cx="655" cy="376" rx="24" ry="9"/></g>
<ellipse cx="605" cy="486" rx="32" ry="12" fill="#c27a78" filter="url(#b0)"/>
<path d="M585 400 Q575 440 600 452" stroke="#c09a8a" stroke-width="8" fill="none" filter="url(#b0)"/>
</g></g>
</svg>
<!-- tile 3 : Joyce Ann Supan -->
<div style="left:1056px;top:250px;width:224px;height:126px;background:#1d1d1d"></div>

<!-- tile 4 : Jesy Ines -->
<svg style="left:1056px;top:375.6px" width="224" height="124.4" viewBox="0 0 1280 709" preserveAspectRatio="none">
<defs>
<linearGradient id="wall4" x1="0" x2="1"><stop offset="0" stop-color="#bcc1b9"/><stop offset=".35" stop-color="#c9cec7"/><stop offset=".75" stop-color="#d6dad4"/><stop offset="1" stop-color="#dfe2dc"/></linearGradient>
<radialGradient id="glow4" cx=".5" cy=".5" r=".5"><stop offset="0" stop-color="#fbfbf8"/><stop offset="1" stop-color="#fbfbf8" stop-opacity="0"/></radialGradient>
<linearGradient id="hair4" x1="0" x2="0" y1="0" y2="1"><stop offset="0" stop-color="#33251f"/><stop offset=".35" stop-color="#5e4232"/><stop offset=".6" stop-color="#a07a55"/><stop offset="1" stop-color="#8a6a50"/></linearGradient>
<filter id="b5" x="-20%" y="-20%" width="140%" height="140%"><feGaussianBlur stdDeviation="5"/></filter>
<clipPath id="c4"><rect width="1280" height="709"/></clipPath>
</defs>
<g clip-path="url(#c4)"><g filter="url(#bA)">
<rect x="-60" y="-60" width="1400" height="829" fill="url(#wall4)"/>
<ellipse cx="1150" cy="640" rx="260" ry="170" fill="url(#glow4)"/>
<g filter="url(#b5)">
<path d="M515 170 Q555 40 680 32 Q805 48 835 190 Q850 300 905 395 Q940 470 885 505 L780 525 L560 525 Q480 570 450 780 L365 780 Q345 640 415 520 Q470 440 480 380 Q500 330 500 290 Z" fill="url(#hair4)"/><path d="M835 330 Q870 420 915 440 Q925 480 880 500 L800 500 Q830 420 800 330 Z" fill="#b08858"/>
<path d="M360 780 Q380 590 440 550 L580 500 L760 520 L925 468 Q1010 520 1022 780 Z" fill="#c9aea6"/>
<path d="M580 500 Q660 600 760 520 L745 440 L600 450 Z" fill="#c29884"/>
<path d="M540 250 Q560 140 660 135 Q760 150 775 270 Q780 390 730 450 Q670 500 610 455 Q540 380 540 250 Z" fill="#c79f8a"/>
</g>
<path d="M575 520 Q670 640 770 530" stroke="#a98e86" stroke-width="12" fill="none" filter="url(#b0)"/>
<path d="M430 780 Q420 600 485 530 Q540 600 505 780 Z" fill="#9a7450" filter="url(#b5)"/>
<g filter="url(#b0)" stroke="#5a4036" stroke-width="10" fill="none" stroke-linecap="round"><path d="M560 285 Q590 275 615 285"/><path d="M675 285 Q705 277 735 290"/><path d="M585 400 Q630 392 670 408"/></g>
<path d="M630 290 Q615 350 640 360" stroke="#a77f6c" stroke-width="9" fill="none" filter="url(#b0)"/>
</g></g>
</svg>
<!-- name labels -->
<div style="left:1056px;top:111px;width:40px;height:13.3px;background:rgba(64,60,58,.93)"></div>
<div style="left:1056px;top:237.5px;width:52.5px;height:12px;background:rgba(64,66,64,.9)"></div>
<div style="left:1056px;top:362.5px;width:71px;height:13px;background:#1f1f1f"></div>
<div style="left:1056px;top:487px;width:38.5px;height:13px;background:rgba(64,60,58,.93)"></div>
<div style="left:1100px;top:301.5px;width:136px;height:21px;background:#242424;border-radius:2px"></div>

<div class="t" style="left:23.8px;top:29.61px;font-size:11.6px;line-height:13.92px;height:13.92px;color:#f4f7ff;transform:scaleX(0.9849);transform-origin:0 0;">WPS Office</div>
<div class="t" style="left:141.3px;top:28.97px;font-size:12.5px;line-height:15.0px;height:15.0px;color:#4a4a4a;transform:scaleX(0.9060);transform-origin:0 0;">DM 24 WE...NCLAIMED</div>
<div class="t" style="left:342.0px;top:28.97px;font-size:12.5px;line-height:15.0px;height:15.0px;color:#4a4a4a;transform:scaleX(0.9543);transform-origin:0 0;">KHDA DET...m to 2pm</div>
<div class="t" style="left:543.5px;top:28.97px;font-size:12.5px;line-height:15.0px;height:15.0px;color:#4a4a4a;transform:scaleX(0.9082);transform-origin:0 0;">DM 24 WE...NCLAIMED</div>
<div class="t" style="left:744.5px;top:28.97px;font-size:12.5px;line-height:15.0px;height:15.0px;color:#2b2b2b;transform:scaleX(0.8873);transform-origin:0 0;">ONLINE CO...ITIES.pdf</div>
<div class="t" style="left:35.5px;top:62.89px;font-size:10.8px;line-height:12.96px;height:12.96px;color:#3a3a3a;transform:scaleX(0.9624);transform-origin:0 0;">Menu</div>
<div class="t" style="left:473.0px;top:62.99px;font-size:10.8px;line-height:12.96px;height:12.96px;color:#fff;font-weight:700;transform:scaleX(1.0067);transform-origin:0 0;">Home</div>
<div class="t" style="left:529.8px;top:63.09px;font-size:10.8px;line-height:12.96px;height:12.96px;color:#3a3a3a;transform:scaleX(0.9217);transform-origin:0 0;">Insert</div>
<div class="t" style="left:583.6px;top:63.09px;font-size:10.8px;line-height:12.96px;height:12.96px;color:#3a3a3a;transform:scaleX(0.9677);transform-origin:0 0;">Comment</div>
<div class="t" style="left:657.5px;top:63.09px;font-size:10.8px;line-height:12.96px;height:12.96px;color:#3a3a3a;transform:scaleX(0.9135);transform-origin:0 0;">Edit</div>
<div class="t" style="left:703.0px;top:63.09px;font-size:10.8px;line-height:12.96px;height:12.96px;color:#3a3a3a;transform:scaleX(0.8525);transform-origin:0 0;">Page</div>
<div class="t" style="left:753.0px;top:63.09px;font-size:10.8px;line-height:12.96px;height:12.96px;color:#3a3a3a;transform:scaleX(0.9352);transform-origin:0 0;">Protect</div>
<div class="t" style="left:814.0px;top:63.09px;font-size:10.8px;line-height:12.96px;height:12.96px;color:#3a3a3a;transform:scaleX(0.9120);transform-origin:0 0;">Tools</div>
<div class="t" style="left:37.1px;top:94.89px;font-size:10.8px;line-height:12.96px;height:12.96px;color:#3a3a3a;transform:scaleX(0.9352);transform-origin:0 0;">Hand Tool</div>
<div class="t" style="left:37.1px;top:121.99px;font-size:10.8px;line-height:12.96px;height:12.96px;color:#3a3a3a;transform:scaleX(0.9102);transform-origin:0 0;">Select Tool</div>
<div class="t" style="left:108.0px;top:122.09px;font-size:10.8px;line-height:12.96px;height:12.96px;color:#3a3a3a;transform:scaleX(0.9508);transform-origin:0 0;">Edit Content</div>
<div class="t" style="left:185.5px;top:122.09px;font-size:10.8px;line-height:12.96px;height:12.96px;color:#3a3a3a;transform:scaleX(0.9405);transform-origin:0 0;">PDF to Word</div>
<div class="t" style="left:268.7px;top:122.09px;font-size:10.8px;line-height:12.96px;height:12.96px;color:#3a3a3a;transform:scaleX(0.9302);transform-origin:0 0;">PDF to Picture</div>
<div class="t" style="left:349.5px;top:122.09px;font-size:10.8px;line-height:12.96px;height:12.96px;color:#3a3a3a;transform:scaleX(0.9599);transform-origin:0 0;">Annotate</div>
<div class="t" style="left:415.1px;top:93.27px;font-size:13px;line-height:15.6px;height:15.6px;color:#3a3a3a;transform:scaleX(0.9502);transform-origin:0 0;">47.78%</div>
<div class="t" style="left:544.0px;top:122.29px;font-size:10.8px;line-height:12.96px;height:12.96px;color:#3a3a3a;transform:scaleX(0.9022);transform-origin:0 0;">Rotate</div>
<div class="t" style="left:667.9px;top:93.07px;font-size:13.5px;line-height:16.2px;height:16.2px;color:#3a3a3a;transform:scaleX(0.9912);transform-origin:0 0;">18/56</div>
<div class="t" style="left:788.0px;top:122.29px;font-size:10.8px;line-height:12.96px;height:12.96px;color:#3a3a3a;transform:scaleX(0.9575);transform-origin:0 0;">Auto Scroll</div>
<div class="t" style="left:861.7px;top:122.29px;font-size:10.8px;line-height:12.96px;height:12.96px;color:#3a3a3a;transform:scaleX(0.9314);transform-origin:0 0;">Read Mode</div>
<div class="t" style="left:928.0px;top:122.29px;font-size:10.8px;line-height:12.96px;height:12.96px;color:#3a3a3a;transform:scaleX(0.9544);transform-origin:0 0;">Background</div>
<div class="t" style="left:1011.0px;top:122.29px;font-size:10.8px;line-height:12.96px;height:12.96px;color:#3a3a3a;transform:scaleX(0.9384);transform-origin:0 0;">Snip and</div>
<div class="t" style="left:34.7px;top:680.69px;font-size:10.8px;line-height:12.96px;height:12.96px;color:#3a3a3a;transform:scaleX(0.9739);transform-origin:0 0;">Navigation</div>
<div class="t" style="left:198.8px;top:679.07px;font-size:13.5px;line-height:16.2px;height:16.2px;color:#3a3a3a;transform:scaleX(0.9971);transform-origin:0 0;">18/56</div>
<div class="t" style="left:1015.0px;top:680.47px;font-size:10.5px;line-height:12.6px;height:12.6px;color:#555;transform:scaleX(0.9517);transform-origin:0 0;">48%</div>
<div class="t" style="left:1059.5px;top:111.78px;font-size:9.5px;line-height:11.4px;height:11.4px;color:#fff;transform:scaleX(0.8697);transform-origin:0 0;">Joel Lara</div>
<div class="t" style="left:1059.5px;top:237.28px;font-size:9.5px;line-height:11.4px;height:11.4px;color:#fff;transform:scaleX(0.8538);transform-origin:0 0;">Aillen Llanes</div>
<div class="t" style="left:1059.5px;top:362.58px;font-size:9.5px;line-height:11.4px;height:11.4px;color:#fff;transform:scaleX(0.8654);transform-origin:0 0;">Joyce Ann Supan</div>
<div class="t" style="left:1059.5px;top:487.78px;font-size:9.5px;line-height:11.4px;height:11.4px;color:#fff;transform:scaleX(0.7972);transform-origin:0 0;">Jesy Ines</div>
<div class="t" style="left:1112.0px;top:304.37px;font-size:13.5px;line-height:16.2px;height:16.2px;color:#fff;font-weight:700;transform:scaleX(0.9842);transform-origin:0 0;">Joyce Ann Supan</div>
<div class="t" style="left:226.6px;top:177.93px;font-size:35.3px;line-height:42.36px;height:42.36px;color:#2e2c5e;font-weight:700;letter-spacing:-0.037px;word-spacing:2.6px;">Communities of Interest</div>
</div>
</body></html>
